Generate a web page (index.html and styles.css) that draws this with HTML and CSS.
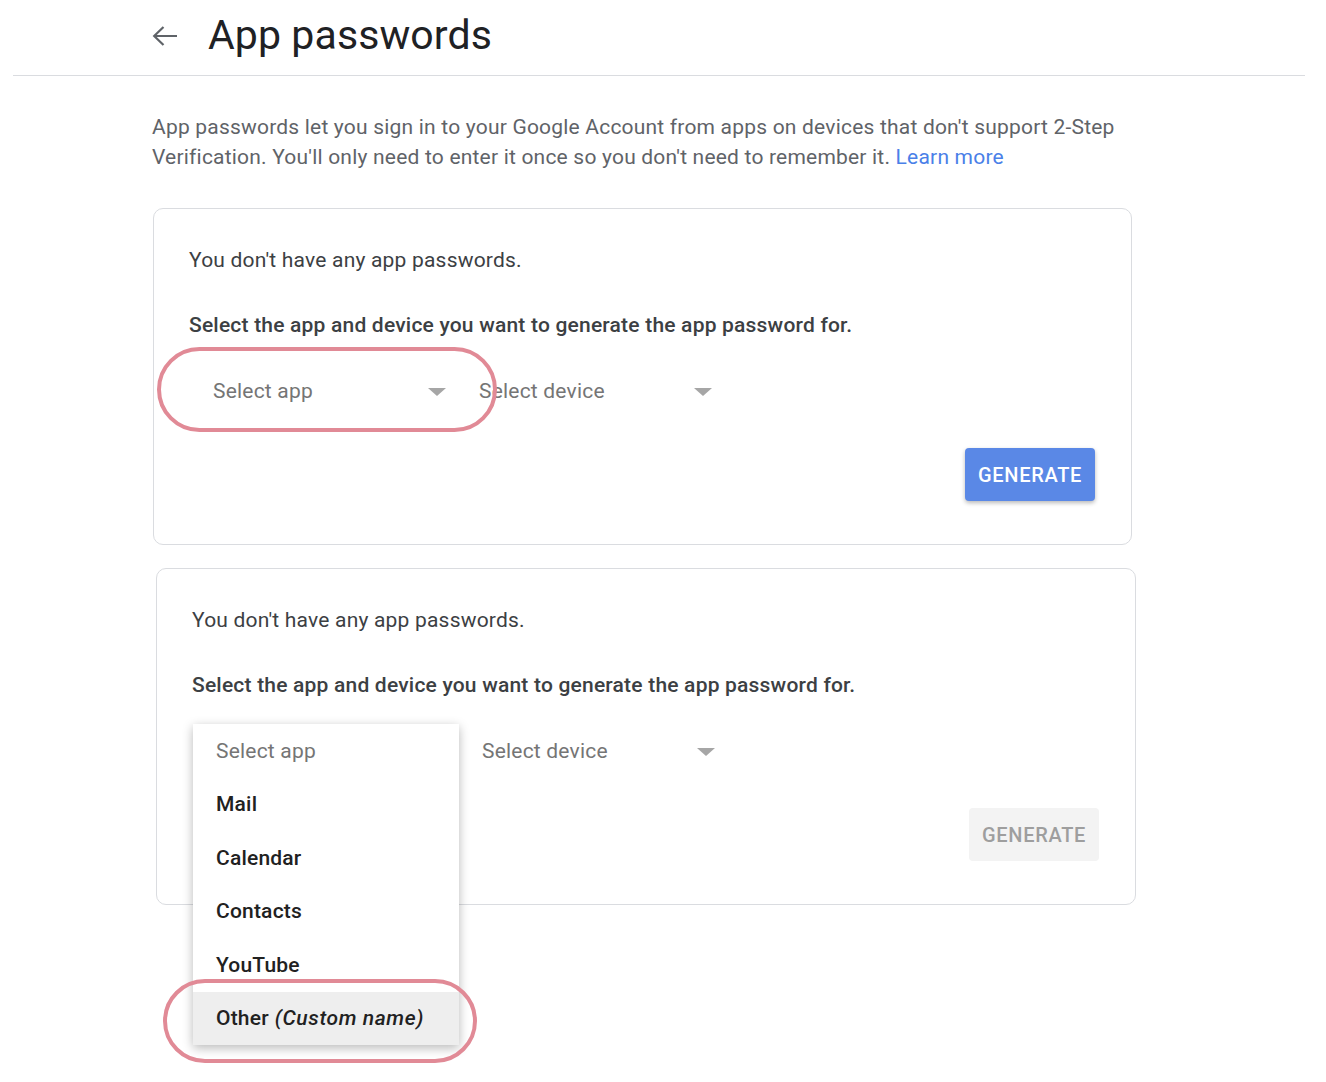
FILE: index.html
```html
<!DOCTYPE html>
<html>
<head>
<meta charset="utf-8">
<link rel="stylesheet" href="styles.css">
</head>
<body>
<div class="page">
  <header class="header">
    <svg class="back" width="26" height="22" viewBox="0 0 26 22"><path d="M25 11H2.5M11.5 2L2.2 11l9.3 9" fill="none" stroke="#5f6368" stroke-width="2.2"/></svg>
    <h1 class="title">App passwords</h1>
  </header>
  <main class="content">
    <p class="intro">App passwords let you sign in to your Google Account from apps on devices that don't support 2-Step Verification. You'll only need to enter it once so you don't need to remember it. <a class="link" href="#">Learn more</a></p>

    <section class="card">
      <p class="none">You don't have any app passwords.</p>
      <p class="instr">Select the app and device you want to generate the app password for.</p>
      <div class="selects">
        <div class="select-wrap">
          <div class="select"><span>Select app</span><span class="caret"></span></div>
          <div class="ring ring-app"></div>
        </div>
        <div class="select"><span>Select device</span><span class="caret"></span></div>
      </div>
      <div class="actions"><button class="btn">GENERATE</button></div>
    </section>

    <section class="card card-two">
      <p class="none">You don't have any app passwords.</p>
      <p class="instr">Select the app and device you want to generate the app password for.</p>
      <div class="selects">
        <div class="select-wrap">
          <div class="select"><span>Select app</span><span class="caret"></span></div>
          <ul class="menu">
            <li class="item placeholder">Select app</li>
            <li class="item">Mail</li>
            <li class="item">Calendar</li>
            <li class="item">Contacts</li>
            <li class="item">YouTube</li>
            <li class="item active">Other <em>(Custom name)</em></li>
          </ul>
          <div class="ring ring-other"></div>
        </div>
        <div class="select"><span>Select device</span><span class="caret"></span></div>
      </div>
      <div class="actions"><button class="btn btn-disabled">GENERATE</button></div>
    </section>
  </main>
</div>
</body>
</html>
```

FILE: styles.css
```css
* { box-sizing: border-box; }
html, body { margin: 0; padding: 0; background: #fff; }
body {
  font-family: Roboto, "Noto Sans", Arial, sans-serif;
  color: #3c4043;
  min-height: 1082px;
}

.page { margin: 0 21px 0 13px; min-height: 1082px; }

.header {
  height: 76px;
  border-bottom: 1px solid #dadce0;
  display: flex;
  align-items: center;
  padding-left: 139px;
  padding-bottom: 6px;
}
.back { display: block; margin-top: 2px; }
.title {
  margin: 0 0 0 30px;
  font-size: 41px;
  font-weight: 400;
  color: #202124;
  letter-spacing: 0.1px;
}

.content { padding-left: 140px; padding-bottom: 180px; }

.intro {
  margin: 36px 0 0 -1px;
  width: 985px;
  font-size: 21px;
  line-height: 30px;
  color: #5f6368;
  letter-spacing: 0.2px;
}
.link { color: #4a80e8; text-decoration: none; }

.card {
  width: 979px;
  margin-top: 36px;
  border: 1px solid #dadce0;
  border-radius: 10px;
  padding: 36px 36px 43px 35px;
}
.card-two { margin-top: 23px; margin-left: 3px; width: 980px; }

.none, .instr {
  margin: 0;
  font-size: 21px;
  line-height: 30px;
  letter-spacing: 0.2px;
  color: #3c4043;
}
.instr { margin-top: 35px; font-weight: 500; }

.selects { display: flex; margin-top: 24px; margin-left: 1px; }
.select-wrap { position: relative; }
.select {
  width: 266px;
  height: 53px;
  display: flex;
  align-items: center;
  justify-content: space-between;
  padding: 0 10px 0 23px;
  font-size: 21px;
  color: #757575;
  letter-spacing: 0.2px;
}
.caret {
  width: 0; height: 0;
  border-left: 9px solid transparent;
  border-right: 9px solid transparent;
  border-top: 8px solid #a6a6a6;
  margin-top: 2px;
}

.actions { display: flex; justify-content: flex-end; margin-top: 31px; }
.btn {
  width: 130px;
  height: 53px;
  border: 0;
  border-radius: 4px;
  background: #5a88e6;
  color: #fff;
  font-family: Roboto, "Noto Sans", Arial, sans-serif;
  font-size: 20px;
  font-weight: 500;
  letter-spacing: 0.7px;
  box-shadow: 0 2px 4px rgba(0,0,0,0.28);
}
.btn-disabled {
  background: #f3f3f3;
  color: #9e9e9e;
  box-shadow: none;
}

.menu {
  position: absolute;
  left: 0; top: 0;
  width: 266px;
  margin: 0; padding: 0;
  list-style: none;
  background: #fff;
  box-shadow: 0 3px 10px rgba(0,0,0,0.28);
  z-index: 2;
}
.item {
  height: 53.5px;
  display: flex;
  align-items: center;
  padding-left: 23px;
  font-size: 21px;
  font-weight: 500;
  color: #212121;
  letter-spacing: 0.2px;
}
.item em { margin-left: 6px; font-weight: 500; letter-spacing: 0.6px; }
.placeholder { color: #757575; font-weight: 400; }
.active { background: #eeeeee; }

.ring {
  position: absolute;
  border: 4px solid #e18a96;
  border-radius: 45px;
  z-index: 3;
  pointer-events: none;
}
.ring-app { left: -33px; top: -17px; width: 340px; height: 85px; }
.ring-other { left: -30px; top: 255px; width: 314px; height: 84px; }
```
